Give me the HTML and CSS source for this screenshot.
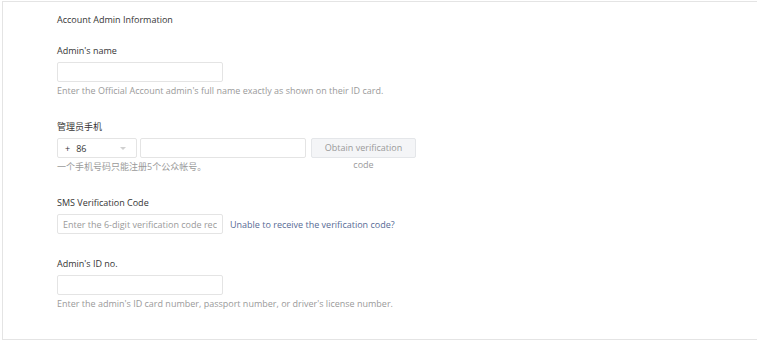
FILE: index.html
```html
<!DOCTYPE html>
<html lang="en">
<head>
    <meta charset="UTF-8">
    <meta name="viewport" content="width=device-width, initial-scale=1.0">
    <title>Account Admin Information</title>
    <link rel="stylesheet" href="styles.css">
</head>
<body>
    <div class="info-card">
        <h3 class="card-title">Account Admin Information</h3>

        <div class="form-group">
            <label for="adminName">Admin's name</label>
            <input type="text" id="adminName" class="text-input">
            <p class="hint">Enter the Official Account admin's full name exactly as shown on their ID card.</p>
        </div>

        <div class="form-group">
            <label for="phone">管理员手机</label>
            <div class="phone-row">
                <div class="country-select">
                    <span class="plus">+</span>
                    <span class="code">86</span>
                    <span class="caret"></span>
                </div>
                <input type="text" id="phone" class="text-input">
                <button type="button" class="obtain-btn">Obtain verification code</button>
            </div>
            <p class="hint">一个手机号码只能注册5个公众帐号。</p>
        </div>

        <div class="form-group sms-group">
            <label for="smsCode">SMS Verification Code</label>
            <div class="sms-row">
                <input type="text" id="smsCode" class="text-input" placeholder="Enter the 6-digit verification code received">
                <a href="#" class="help-link">Unable to receive the verification code?</a>
            </div>
        </div>

        <div class="form-group">
            <label for="idNo">Admin's ID no.</label>
            <input type="text" id="idNo" class="text-input">
            <p class="hint">Enter the admin's ID card number, passport number, or driver's license number.</p>
        </div>
    </div>
</body>
</html>
```

FILE: styles.css
```css
:root {
    --border-color: #e4e4e4;
    --text-primary: #353535;
    --text-hint: #9a9a9a;
    --link-color: #576b95;
    --btn-bg: #f4f5f7;
}

* {
    margin: 0;
    padding: 0;
    box-sizing: border-box;
}

body {
    font-family: 'Open Sans', 'Noto Sans CJK SC', sans-serif;
    font-size: 9px;
    color: var(--text-primary);
    background-color: #ffffff;
    margin: 1px 0 0 2px;
    overflow: hidden;
}

.info-card {
    border: 1px solid var(--border-color);
    border-right: none;
    height: 339px;
    padding: 11px 0 0 54px;
}

.card-title {
    font-size: 9px;
    font-weight: normal;
    line-height: 14px;
    margin-bottom: 17px;
}

.form-group {
    margin-bottom: 22px;
}

.sms-group {
    margin-bottom: 23px;
}

label {
    display: block;
    line-height: 14px;
    margin-bottom: 4px;
}

.text-input {
    display: block;
    width: 166px;
    height: 20px;
    border: 1px solid var(--border-color);
    border-radius: 2px;
    padding: 0 5px;
    font-family: inherit;
    font-size: 9px;
    color: var(--text-primary);
    outline: none;
}

.text-input::placeholder {
    color: var(--text-hint);
}

.hint {
    color: var(--text-hint);
    line-height: 14px;
    margin-top: 2px;
}

.phone-row,
.sms-row {
    display: flex;
    align-items: flex-start;
    gap: 3px;
}

.sms-row {
    gap: 7px;
    align-items: center;
}

.country-select {
    width: 80px;
    height: 20px;
    border: 1px solid var(--border-color);
    border-radius: 2px;
    display: flex;
    align-items: center;
    padding-left: 7px;
    position: relative;
}

.plus {
    margin-right: 6px;
}

.caret {
    position: absolute;
    right: 10px;
    top: 8px;
    border-left: 3px solid transparent;
    border-right: 3px solid transparent;
    border-top: 3px solid #d0d0d0;
}

.obtain-btn {
    width: 105px;
    height: 20px;
    margin-left: 2px;
    background-color: var(--btn-bg);
    border: 1px solid #e4e6e9;
    border-radius: 2px;
    color: var(--text-hint);
    font-family: inherit;
    font-size: 9px;
    line-height: 17px;
    padding: 0 10px;
    text-align: center;
    overflow: visible;
}

.help-link {
    color: var(--link-color);
    text-decoration: none;
}
```
